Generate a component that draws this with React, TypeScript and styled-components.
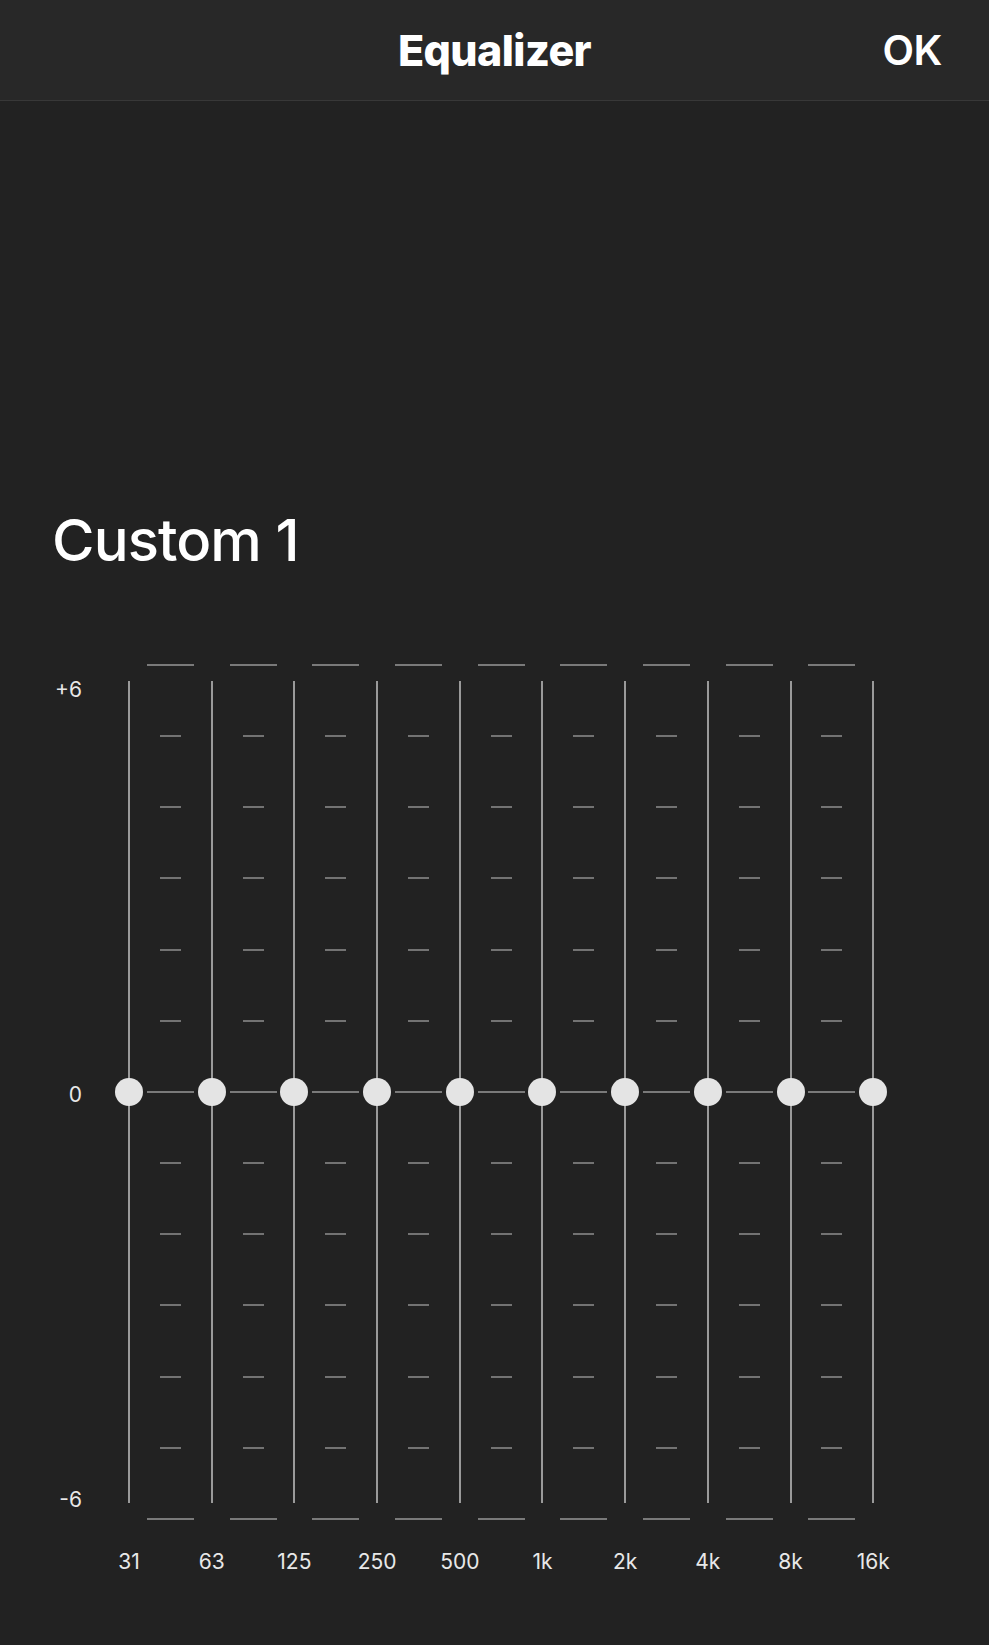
import { Fragment } from 'react';
import styled, { createGlobalStyle } from 'styled-components';

const GlobalStyle = createGlobalStyle`
    html, body {
        margin: 0;
        padding: 0;
        background: #222222;
    }
    body {
        font-family: Inter, "Liberation Sans", Arial, sans-serif;
        color: #ffffff;
        -webkit-font-smoothing: antialiased;
    }
`;

const bands = ['31', '63', '125', '250', '500', '1k', '2k', '4k', '8k', '16k'];
// 6 steps above and below zero, plus the outer rails
const rows = Array.from({ length: 13 }, (_, i) => i);

const Page = styled.div`
    min-height: 1645px;
    display: flex;
    flex-direction: column;
    background: #222222;
`;

const Header = styled.header`
    height: 100px;
    display: grid;
    grid-template-columns: 1fr auto 1fr;
    align-items: center;
    padding: 0 47px;
    background: #282828;
    border-bottom: 1px solid #383838;
`;

const Title = styled.h1`
    grid-column: 2;
    margin: 0;
    font-size: 43px;
    font-weight: 800;
    letter-spacing: -0.6px;
`;

const OkButton = styled.button`
    grid-column: 3;
    justify-self: end;
    border: none;
    background: none;
    padding: 0;
    color: #ffffff;
    font-family: inherit;
    font-size: 41px;
    font-weight: 600;
    letter-spacing: -0.4px;
    cursor: pointer;
`;

const Content = styled.main`
    display: flex;
    flex-direction: column;
    padding: 410px 0 0 52px;
`;

const PresetName = styled.h2`
    margin: 0;
    font-size: 58px;
    line-height: 58px;
    font-weight: 500;
    letter-spacing: -0.9px;
`;

const Board = styled.div`
    display: flex;
    align-items: flex-start;
    margin-top: 95px;
`;

const Axis = styled.div`
    width: 30px;
    height: 856px;
    box-sizing: border-box;
    padding: 15px 0 10px;
    margin-right: 33px;
    display: flex;
    flex-direction: column;
    justify-content: space-between;
    align-items: flex-end;
`;

const AxisLabel = styled.span`
    font-size: 21px;
    line-height: 21px;
    color: #e8e8e8;
`;

const Band = styled.div`
    width: 28px;
    display: flex;
    flex-direction: column;
    align-items: center;
`;

const Track = styled.div`
    position: relative;
    width: 28px;
    height: 856px;
    box-sizing: border-box;
    padding: 17px 0;
    display: flex;
    justify-content: center;
`;

const Rail = styled.div`
    width: 2px;
    height: 100%;
    background: #9a9a9a;
`;

const Thumb = styled.div`
    position: absolute;
    left: 0;
    width: 28px;
    height: 28px;
    border-radius: 50%;
    background: #e4e4e4;
    transform: translateY(-50%);
`;

const FreqLabel = styled.span`
    margin-top: 31px;
    width: 28px;
    display: flex;
    justify-content: center;
    white-space: nowrap;
    font-size: 21px;
    line-height: 21px;
    color: #e8e8e8;
`;

const Ticks = styled.div`
    width: 54.7px;
    height: 856px;
    display: flex;
    flex-direction: column;
    justify-content: space-between;
    align-items: center;
`;

const Tick = styled.div<{ $long: boolean }>`
    width: ${(p) => (p.$long ? '47px' : '21px')};
    height: 2px;
    background: ${(p) => (p.$long ? '#7a7a7a' : '#737373')};
`;

// gain per band in dB, range -6..+6
const gains = bands.map(() => 0);

export default function App() {
    return (
        <Page>
            <GlobalStyle />
            <Header>
                <Title>Equalizer</Title>
                <OkButton>OK</OkButton>
            </Header>
            <Content>
                <PresetName>Custom 1</PresetName>
                <Board>
                    <Axis>
                        <AxisLabel>+6</AxisLabel>
                        <AxisLabel>0</AxisLabel>
                        <AxisLabel>-6</AxisLabel>
                    </Axis>
                    {bands.map((b, i) => (
                        <Fragment key={b}>
                            <Band>
                                <Track>
                                    <Rail />
                                    <Thumb
                                        style={{
                                            top: `${17 + ((6 - gains[i]) / 12) * 822}px`,
                                        }}
                                    />
                                </Track>
                                <FreqLabel>{b}</FreqLabel>
                            </Band>
                            {i < bands.length - 1 && (
                                <Ticks>
                                    {rows.map((r) => (
                                        <Tick key={r} $long={r % 6 === 0} />
                                    ))}
                                </Ticks>
                            )}
                        </Fragment>
                    ))}
                </Board>
            </Content>
        </Page>
    );
}
